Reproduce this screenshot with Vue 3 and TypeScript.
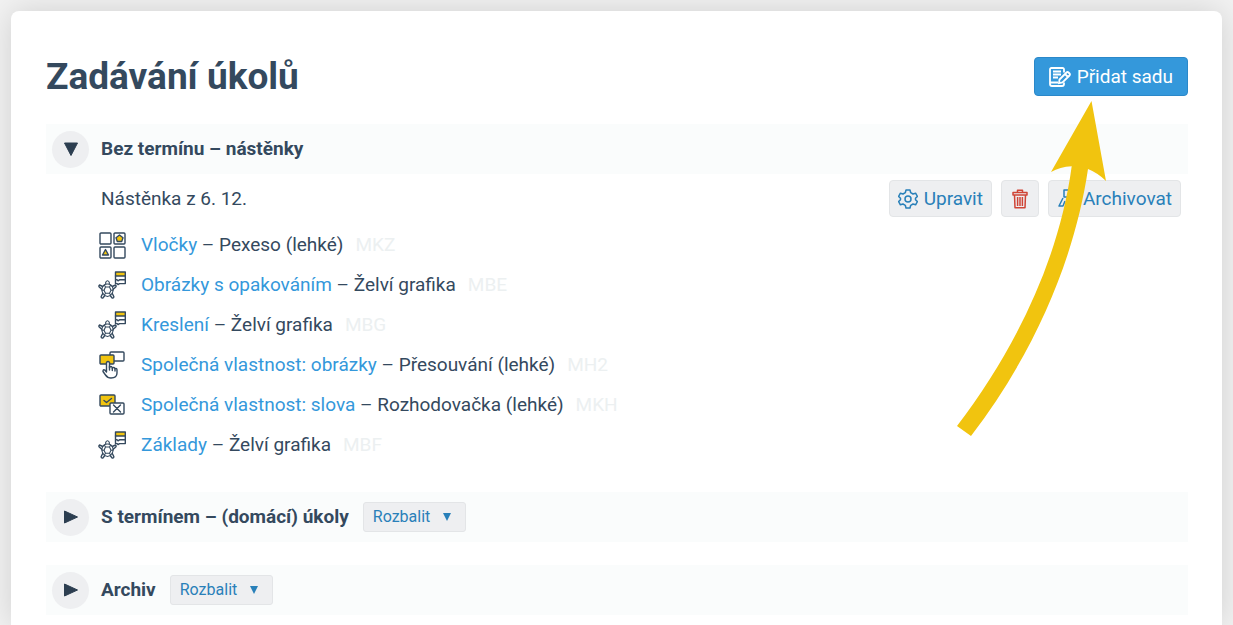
<script setup lang="ts">
type IconName = 'cards' | 'turtle' | 'drag' | 'decide'

interface Task {
  name: string
  kind: string
  code: string
  icon: IconName
}

const tasks: Task[] = [
  { name: 'Vločky', kind: 'Pexeso (lehké)', code: 'MKZ', icon: 'cards' },
  { name: 'Obrázky s opakováním', kind: 'Želví grafika', code: 'MBE', icon: 'turtle' },
  { name: 'Kreslení', kind: 'Želví grafika', code: 'MBG', icon: 'turtle' },
  { name: 'Společná vlastnost: obrázky', kind: 'Přesouvání (lehké)', code: 'MH2', icon: 'drag' },
  { name: 'Společná vlastnost: slova', kind: 'Rozhodovačka (lehké)', code: 'MKH', icon: 'decide' },
  { name: 'Základy', kind: 'Želví grafika', code: 'MBF', icon: 'turtle' },
]

const collapsed: string[] = ['S termínem – (domácí) úkoly', 'Archiv']
</script>

<template>
  <main class="card">
    <header class="top">
      <h1>Zadávání úkolů</h1>
      <button type="button" class="primary">
        <svg class="add-icon" viewBox="0 0 22 20" aria-hidden="true">
          <path d="M15 5.5V2.5Q15 1 13.5 1H2.5Q1 1 1 2.5V17Q1 19 3 19H13Q15 19 15 17V15.5" />
          <path d="M4 4.5H12M4 7.5H12M4 10.5H9M1 15.5H9" />
          <path d="M10.5 12.5L17.5 5.5Q18.5 4.5 19.5 5.5L20.5 6.5Q21.5 7.5 20.5 8.5L13.5 15.5L10 16.2ZM16 7L19 10" />
        </svg>
        <span>Přidat sadu</span>
      </button>
    </header>

    <section>
      <div class="bar">
        <button type="button" class="toggle" aria-label="Sbalit" aria-expanded="true">
          <svg viewBox="0 0 16 16" aria-hidden="true"><path d="M1.5 2H14.5L8 14.5Z" /></svg>
        </button>
        <h2>Bez termínu – nástěnky</h2>
      </div>

      <div class="board">
        <span class="board-name">Nástěnka z 6. 12.</span>
        <div class="actions">
          <button type="button" class="action">
            <svg class="line" viewBox="0 0 20 20" aria-hidden="true">
              <path d="M8 1H12L12.7 3.7L15 5L17.6 4.2L19.4 7.4L17.5 9.2V10.8L19.4 12.6L17.6 15.8L15 15L12.7 16.3L12 19H8L7.3 16.3L5 15L2.4 15.8L.6 12.6L2.5 10.8V9.2L.6 7.4L2.4 4.2L5 5L7.3 3.7Z" />
              <circle cx="10" cy="10" r="3" />
            </svg>
            <span>Upravit</span>
          </button>
          <button type="button" class="action danger" aria-label="Smazat">
            <svg class="line" viewBox="0 0 20 20" aria-hidden="true">
              <path d="M3 3.5H17V6H3ZM7.5 3.5V1.2H12.5V3.5M4.5 6L5 18.8H15L15.5 6M7.6 8V17M10 8V17M12.4 8V17" />
            </svg>
          </button>
          <button type="button" class="action">
            <svg class="line" viewBox="0 0 20 20" aria-hidden="true">
              <path d="M6 9L2 17H6L8 12M7 1V8H13V1ZM14 9L18 17H14L12 12" />
            </svg>
            <span>Archivovat</span>
          </button>
        </div>
      </div>

      <ul class="tasks">
        <li v-for="task in tasks" :key="task.code">
          <svg class="task-icon" viewBox="0 0 28 28" aria-hidden="true">
            <g v-if="task.icon === 'cards'">
              <rect x="2" y="2" width="11" height="11" rx="1" />
              <rect x="16" y="2" width="11" height="11" rx="1" />
              <rect x="2" y="16" width="11" height="11" rx="1" />
              <rect x="16" y="16" width="11" height="11" rx="1" />
              <path class="fill" d="M21.5 4L25 6.8L23.7 10.5H19.3L18 6.8ZM7.5 18.5L10.5 24H4.5Z" />
            </g>
            <g v-else-if="task.icon === 'turtle'">
              <path class="fill" d="M17.5 1H27.3V5H17.5Z" />
              <path d="M17.5 5V12.6H19L20 13.6L21.5 12.6H27.3V5M17.5 8.8H19L20 9.8L21.5 8.8H27.3" />
              <path class="thin" d="M7.7 13V11.3Q9.5 8.3 11.3 11.3V13" />
              <path class="thin" d="M9.5 13Q14 13 15.2 18Q15 24.5 9.5 25.5Q4 24.5 3.8 18Q5 13 9.5 13Z" />
              <path class="thin" d="M7.5 16H11.5L13 19.2L11.5 22.3H7.5L6 19.2ZM7.5 16L6.5 14.2M11.5 16L12.5 14.2M13 19.2H15M11.5 22.3L12.7 24.2M7.5 22.3L6.3 24.2M6 19.2H4" />
              <path d="M4.8 15.5L1.5 14Q.5 14.8 1.2 16L3.8 18.2M14.2 15.5L17.5 14Q18.5 14.8 17.8 16L15.2 18.2M4.7 22.5L3.2 25.5Q3 27.4 4.8 27L6.5 25M14.3 22.5L15.8 25.5Q16 27.4 14.2 27L12.5 25" />
            </g>
            <g v-else-if="task.icon === 'drag'">
              <rect x="12" y="1" width="14" height="9" rx="1" />
              <rect class="fill" x="2" y="4" width="14" height="9" rx="1" />
              <path class="hand" d="M8.5 21V11.5Q10 9.5 11.5 11.5V17L12 15.8Q13.8 15 14.3 17Q16 15.7 17 17.7Q19 17 19 19V22Q19 27 13 27Q9.5 27 7.5 24L5 20.5Q5 18 7 19.2Z" />
              <path d="M11.5 15V19M14.3 17V19.5M17 18V20" />
            </g>
            <g v-else>
              <rect class="fill" x="2" y="4" width="15" height="11" rx="1" />
              <path d="M6 9.5L8.5 11.5L13.5 7.5" />
              <rect class="paper" x="12" y="12" width="14" height="11" rx="1" />
              <path d="M15.5 14L22.5 21M22.5 14L15.5 21" />
            </g>
          </svg>
          <span><a href="#">{{ task.name }}</a> – {{ task.kind }}</span>
          <span class="code">{{ task.code }}</span>
        </li>
      </ul>
    </section>

    <section v-for="title in collapsed" :key="title" class="collapsed">
      <div class="bar">
        <button type="button" class="toggle" :aria-label="title" aria-expanded="false">
          <svg viewBox="0 0 16 16" aria-hidden="true"><path d="M1.5 2L14.5 8L1.5 14Z" /></svg>
        </button>
        <h2>{{ title }}</h2>
        <button type="button" class="expand">
          <span>Rozbalit</span>
          <svg viewBox="0 0 10 10" aria-hidden="true"><path d="M1 1H9L5 9Z" /></svg>
        </button>
      </div>
    </section>

    <svg class="arrow" viewBox="957 101 150 336" aria-hidden="true">
      <path d="M1091.5 101L1106 181Q1098 173 1088 169C1075 257 1036 351 971 436L957 426C1015 350 1059 260 1071.7 166.3Q1060 167 1051 172Z" />
    </svg>
  </main>
</template>

<style>
body {
  margin: 0;
  background: #f2f2f2;
}
</style>

<style scoped>
.card {
  position: relative;
  box-sizing: border-box;
  margin: 11px 11px 0;
  padding: 46px 34px 10px 35px;
  border-radius: 8px 8px 0 0;
  background: #fff;
  box-shadow: 0 0 32px rgba(0, 0, 0, 0.14);
  color: #34495e;
  font-family: Roboto, "Liberation Sans", sans-serif;
  font-size: 19px;
  line-height: 24px;
}
button {
  display: inline-flex;
  align-items: center;
  box-sizing: border-box;
  margin: 0;
  font: inherit;
  cursor: pointer;
}
svg {
  display: block;
  flex: none;
}
.top {
  display: flex;
  align-items: center;
  justify-content: space-between;
  height: 39px;
  margin-bottom: 28px;
}
h1 {
  margin: 0;
  font-size: 37px;
  line-height: 40px;
  font-weight: 700;
}
.primary {
  height: 39px;
  gap: 6px;
  padding: 0 14px;
  border: 1px solid #2b88c9;
  border-radius: 4px;
  background: #3498db;
  color: #fff;
}
.add-icon {
  width: 22px;
  height: 20px;
  fill: none;
  stroke: currentColor;
  stroke-width: 1.8;
}
.bar {
  display: flex;
  align-items: center;
  height: 50px;
  padding-left: 6px;
  background: #fafcfc;
}
.toggle {
  justify-content: center;
  width: 37px;
  height: 37px;
  padding: 0;
  border: 0;
  border-radius: 50%;
  background: #eeeff1;
}
.toggle svg {
  width: 16px;
  height: 16px;
  fill: #2c3e50;
  stroke: #2c3e50;
  stroke-width: 1;
  stroke-linejoin: round;
}
h2 {
  margin: 0 0 0 12px;
  font-size: 19px;
  line-height: 24px;
  font-weight: 700;
}
.board {
  display: flex;
  align-items: center;
  justify-content: space-between;
  height: 49px;
  padding: 0 7px 0 55px;
}
.actions {
  display: flex;
  gap: 9px;
}
.action {
  height: 37px;
  gap: 6px;
  padding: 0 8px;
  border: 1px solid #e3e5e7;
  border-radius: 4px;
  background: #eeeff1;
  color: #2980b9;
}
.line {
  width: 20px;
  height: 20px;
  fill: none;
  stroke: currentColor;
  stroke-width: 1.5;
  stroke-linejoin: round;
}
.danger {
  color: #cf4436;
}
.tasks {
  margin: 2px 0 27px;
  padding: 0 0 0 52px;
  list-style: none;
}
.tasks li {
  display: flex;
  align-items: center;
  height: 40px;
}
.task-icon {
  width: 28px;
  height: 28px;
  margin-right: 15px;
  fill: none;
  stroke: #34495e;
  stroke-width: 1.4;
  stroke-linejoin: round;
  stroke-linecap: round;
}
.fill {
  fill: #f1c40f;
}
.paper,
.hand {
  fill: #fff;
}
.thin {
  stroke-width: 1.1;
}
a {
  color: #3498db;
  text-decoration: none;
}
.code {
  margin-left: 12px;
  color: #ecf0f1;
}
.collapsed + .collapsed {
  margin-top: 23px;
}
.expand {
  height: 30px;
  gap: 12px;
  margin-left: 14px;
  padding: 0 13px 0 9px;
  border: 1px solid #e3e5e7;
  border-radius: 3px;
  background: #eeeff1;
  color: #2980b9;
  font-size: 16px;
}
.expand svg {
  width: 10px;
  height: 10px;
  fill: currentColor;
}
.arrow {
  position: absolute;
  top: 90px;
  right: 115px;
  width: 150px;
  height: 336px;
  fill: #f1c40f;
  pointer-events: none;
}
</style>
